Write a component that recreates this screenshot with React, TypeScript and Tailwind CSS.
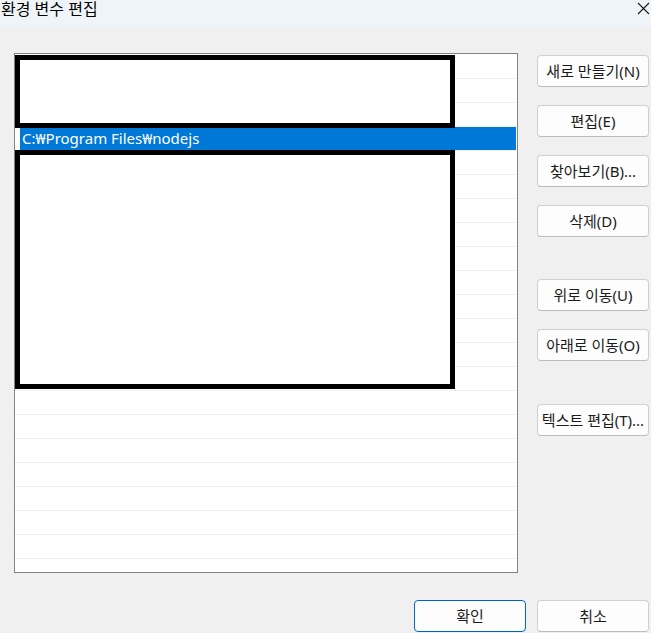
import React from "react";

const font = {
  fontFamily: '"Noto Sans", "Noto Sans CJK KR", sans-serif',
};

const ROWS = 22;

function DlgButton({ label, primary }: { label: string; primary?: boolean }) {
  return (
    <button
      className={
        "h-[32px] w-[112px] shrink-0 rounded-[4px] bg-[#fdfdfd] text-[15px] leading-none text-[#1b1b1b] whitespace-nowrap " +
        (primary ? "border border-[#0067c0]" : "border border-[#d0d0d0] border-b-[#bcbcbc]")
      }
    >
      {label}
    </button>
  );
}

export default function App() {
  return (
    <div className="w-[651px] h-[633px] overflow-hidden bg-[#f0f0f0] flex flex-col" style={font}>
      {/* title bar */}
      <div className="h-[27px] shrink-0 bg-[#eff4f9] flex justify-between overflow-hidden">
        <span className="ml-[1px] text-[16px] leading-[18px] text-black">환경 변수 편집</span>
        <svg width="13" height="13" viewBox="0 0 13 13" className="mt-[2px] mr-[1px]">
          <path d="M1 1 L12 12 M12 1 L1 12" stroke="#1a1a1a" strokeWidth="1.1" />
        </svg>
      </div>

      <div className="flex-1 flex flex-col pt-[26px] pl-[14px] pr-[2px]">
        <div className="flex gap-[19px]">
          {/* path list */}
          <div className="relative w-[504px] h-[520px] border border-[#838383] bg-white overflow-hidden pt-[1px]">
            {Array.from({ length: ROWS }).map((_, i) => (
              <div key={i} className="h-[24px] border-b border-[#f0f0f0] mr-[1px]">
                {i === 3 && (
                  <div className="ml-[5px] h-[23px] bg-[#0078d7] text-white text-[15px] leading-[23px] pl-[2px]">
                    C:₩Program Files₩nodejs
                  </div>
                )}
              </div>
            ))}
            {/* redaction boxes */}
            <div className="absolute left-0 top-[1px] w-[440px] h-[73px] border-[5px] border-black bg-white" />
            <div className="absolute left-0 top-[96px] w-[440px] h-[239px] border-[5px] border-black bg-white" />
          </div>

          {/* side buttons */}
          <div className="flex flex-col mt-[2px]">
            <div className="flex flex-col gap-[18px]">
              <DlgButton label="새로 만들기(N)" />
              <DlgButton label="편집(E)" />
              <DlgButton label="찾아보기(B)..." />
              <DlgButton label="삭제(D)" />
            </div>
            <div className="flex flex-col gap-[18px] mt-[42px]">
              <DlgButton label="위로 이동(U)" />
              <DlgButton label="아래로 이동(O)" />
            </div>
            <div className="mt-[43px]">
              <DlgButton label="텍스트 편집(T)..." />
            </div>
          </div>
        </div>

        <div className="flex justify-end gap-[11px] mt-[27px]">
          <DlgButton label="확인" primary />
          <DlgButton label="취소" />
        </div>
      </div>
    </div>
  );
}
